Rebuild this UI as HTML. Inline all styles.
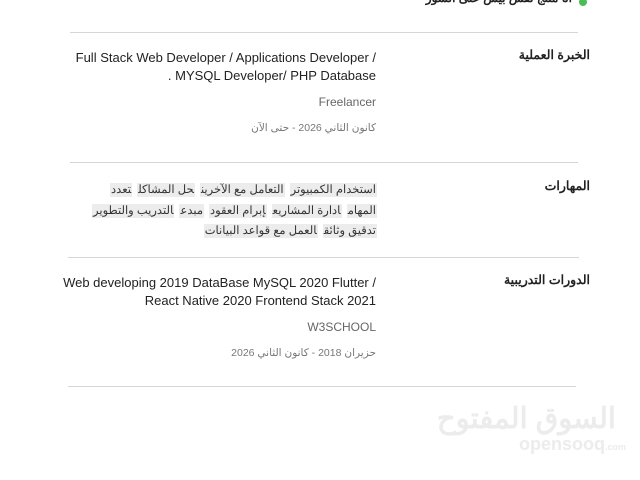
<!DOCTYPE html>
<html><head><meta charset="utf-8"><style>
body{margin:0;width:640px;height:480px;background:#fff;position:relative;overflow:hidden;font-family:"Liberation Sans","Noto Sans CJK SC",sans-serif;color:#222}
.a{position:absolute;white-space:nowrap}
.r{direction:rtl;text-align:right}
.line{position:absolute;height:1px;background:#d6d6d6}
.lab{font-weight:bold;font-size:12.5px;color:#222}
.t{font-size:13px;line-height:18px;color:#222;text-align:right}
.s{font-size:12px;color:#666}
.d{font-size:10.5px;color:#777}
.chips{position:absolute;right:263px;top:180px;direction:rtl;text-align:right;font-size:11.5px;line-height:20.5px;color:#333;white-space:nowrap}
.chips span{background:#ececec;padding:1px 1px;margin-left:5px}
</style></head><body>
<div class="a r" style="right:68px;top:-9px;font-size:12px;font-weight:bold;color:#222">انا منتج نفس بيش على السور</div>
<div class="a" style="left:579px;top:-2px;width:8px;height:8px;border-radius:50%;background:#4cbb5a"></div>
<div class="line" style="left:70px;width:508px;top:32px"></div>

<div class="a r lab" style="right:50px;top:47px">الخبرة العملية</div>
<div class="a t" style="right:264px;top:49px">Full Stack Web Developer / Applications Developer /<br>. MYSQL Developer/ PHP Database</div>
<div class="a s" style="right:264px;top:95px">Freelancer</div>
<div class="a r d" style="right:264px;top:122px">كانون الثاني 2026 - حتى الآن</div>
<div class="line" style="left:70px;width:508px;top:162px"></div>

<div class="a r lab" style="right:50px;top:178px">المهارات</div>
<div class="chips"><span>استخدام الكمبيوتر</span><span>التعامل مع الآخرين</span><span>حل المشاكل</span><span>تعدد</span><br><span>المهام</span><span>ادارة المشاريع</span><span>إبرام العقود</span><span>مبدع</span><span>التدريب والتطوير</span><br><span>تدقيق وثائق</span><span>العمل مع قواعد البيانات</span></div>
<div class="line" style="left:68px;width:511px;top:257px"></div>

<div class="a r lab" style="right:50px;top:272px">الدورات التدريبية</div>
<div class="a t" style="right:264px;top:274px">Web developing 2019 DataBase MySQL 2020 Flutter /<br>React Native 2020 Frontend Stack 2021</div>
<div class="a s" style="right:264px;top:320px">W3SCHOOL</div>
<div class="a r d" style="right:264px;top:347px">حزيران 2018 - كانون الثاني 2026</div>
<div class="line" style="left:68px;width:508px;top:386px"></div>

<div class="a r" style="right:24px;top:400px;font-size:29px;font-weight:bold;color:#ececec;line-height:38px">السوق المفتوح</div>
<div class="a" style="left:519px;top:434px;font-size:18px;font-weight:bold;color:#ececec">opensooq<span style="font-size:9px">.com</span></div>
</body></html>
